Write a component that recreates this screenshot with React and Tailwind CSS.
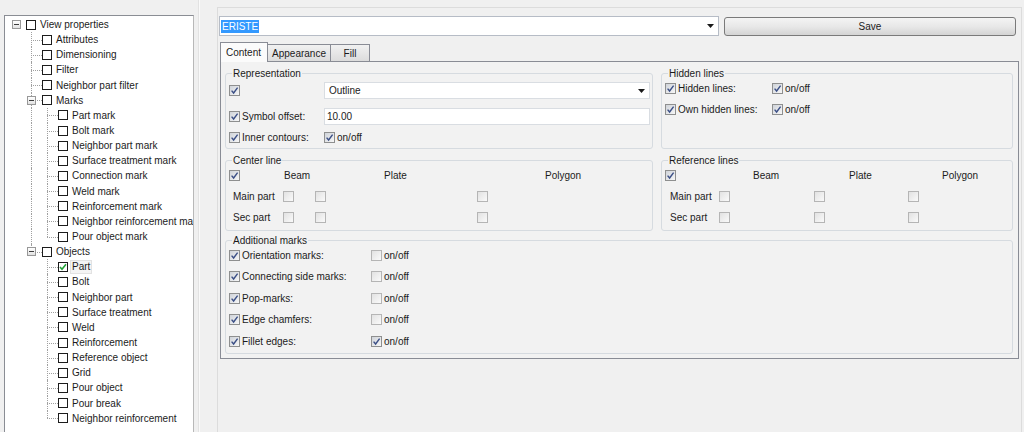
import React from 'react';

const Tick = () => (
  <svg viewBox="0 0 9 9" className="w-[9px] h-[9px]">
    <path d="M1.6 4.6 L3.6 7 L7.6 1.6" fill="none" stroke="#3b4f86" strokeWidth="1.4" />
  </svg>
);

function CB({ checked }) {
  return (
    <span
      className={
        checked
          ? 'inline-flex shrink-0 w-[11px] h-[11px] border border-[#8e8f8f] bg-gradient-to-br from-[#cfd3d9] to-[#f7f7f7] items-center justify-center'
          : 'inline-flex shrink-0 w-[11px] h-[11px] border border-[#b5b5b5] bg-gradient-to-br from-[#e2e2e2] to-[#fafafa] items-center justify-center'
      }
    >
      {checked && <Tick />}
    </span>
  );
}

function TCB({ checked }) {
  return (
    <span className="inline-flex shrink-0 ml-[2px] w-[10px] h-[10px] border border-[#1c1c1c] bg-white items-center justify-center">
      {checked && (
        <svg viewBox="0 0 8 8" className="w-[8px] h-[8px]">
          <path d="M1 4 L3 6.3 L7 1.2" fill="none" stroke="#22a338" strokeWidth="1.6" />
        </svg>
      )}
    </span>
  );
}

const Exp = () => (
  <span className="inline-flex w-[9px] h-[9px] border border-[#989898] bg-gradient-to-b from-white to-[#e2e2e2] items-center justify-center">
    <span className="w-[5px] h-px bg-[#3c3c3c]" />
  </span>
);

function Conn({ last, exp }) {
  return (
    <span className="relative w-[16px] h-full shrink-0">
      <span
        className={
          last
            ? 'absolute left-[7px] top-0 h-1/2 border-l border-dotted border-[#a0a0a0]'
            : 'absolute left-[7px] top-0 bottom-0 border-l border-dotted border-[#a0a0a0]'
        }
      />
      <span className="absolute left-[7px] right-[-2px] top-1/2 border-t border-dotted border-[#a0a0a0]" />
      {exp && (
        <span className="absolute left-[3px] top-[3px] flex">
          <Exp />
        </span>
      )}
    </span>
  );
}

function ContLine() {
  return (
    <span className="relative w-[16px] h-full shrink-0">
      <span className="absolute left-[7px] top-0 bottom-0 border-l border-dotted border-[#a0a0a0]" />
    </span>
  );
}

const tree = [
  { l: 0, t: 'View properties' },
  { l: 1, t: 'Attributes' },
  { l: 1, t: 'Dimensioning' },
  { l: 1, t: 'Filter' },
  { l: 1, t: 'Neighbor part filter' },
  { l: 1, t: 'Marks', exp: true },
  { l: 2, t: 'Part mark', cont: true },
  { l: 2, t: 'Bolt mark', cont: true },
  { l: 2, t: 'Neighbor part mark', cont: true },
  { l: 2, t: 'Surface treatment mark', cont: true },
  { l: 2, t: 'Connection mark', cont: true },
  { l: 2, t: 'Weld mark', cont: true },
  { l: 2, t: 'Reinforcement mark', cont: true },
  { l: 2, t: 'Neighbor reinforcement mark', cont: true },
  { l: 2, t: 'Pour object mark', cont: true, last: true },
  { l: 1, t: 'Objects', exp: true, last: true },
  { l: 2, t: 'Part', checked: true, sel: true },
  { l: 2, t: 'Bolt' },
  { l: 2, t: 'Neighbor part' },
  { l: 2, t: 'Surface treatment' },
  { l: 2, t: 'Weld' },
  { l: 2, t: 'Reinforcement' },
  { l: 2, t: 'Reference object' },
  { l: 2, t: 'Grid' },
  { l: 2, t: 'Pour object' },
  { l: 2, t: 'Pour break' },
  { l: 2, t: 'Neighbor reinforcement', last: true },
];

function TreeRow({ r }) {
  return (
    <div className="flex items-center h-[15.15px] whitespace-nowrap">
      {r.l === 0 ? (
        <span className="w-[16px] h-full shrink-0 flex items-center justify-center">
          <Exp />
        </span>
      ) : (
        <span className="w-[16px] h-full shrink-0" />
      )}
      {r.l === 1 && <Conn last={r.last} exp={r.exp} />}
      {r.l === 2 && (r.cont ? <ContLine /> : <span className="w-[16px] h-full shrink-0" />)}
      {r.l === 2 && <Conn last={r.last} />}
      <TCB checked={r.checked} />
      {r.sel ? (
        <span className="ml-[2px] px-[1px] border border-[#e2e2e2] bg-[#f4f4f4] leading-[12px]">{r.t}</span>
      ) : (
        <span className="ml-[4px] leading-[13px]">{r.t}</span>
      )}
    </div>
  );
}

const Arrow = () => (
  <svg viewBox="0 0 7 4" className="w-[7px] h-[4px]">
    <path d="M0 0 H7 L3.5 4 Z" fill="#1a1a1a" />
  </svg>
);

function Group({ title, className, children }) {
  return (
    <fieldset className={`border border-[#d6dbe0] rounded-[3px] pl-[3px] pr-[2px] ${className}`}>
      <legend className="ml-[3px] px-[1px] leading-[13px]">{title}</legend>
      {children}
    </fieldset>
  );
}

function Mark({ label, on, first }) {
  return (
    <div className={first ? 'flex items-center h-[14px] mt-[1px]' : 'flex items-center h-[14px]'}>
      <span className="flex items-center w-[142px]">
        <CB checked />
        <span className="ml-[2px]">{label}</span>
      </span>
      <CB checked={on} />
      <span className="ml-[2px]">on/off</span>
    </div>
  );
}

export default function App() {
  return (
    <div className="w-[1024px] h-[432px] overflow-hidden bg-[#f0f0f0] flex font-['Liberation_Sans',Arial,sans-serif] text-[10px] text-[#1b1b1b]">
      {/* left tree */}
      <div className="w-[194px] shrink-0 pl-[4px] pt-[15px]">
        <div className="w-[190px] h-[430px] bg-white border border-[#8a8d94] border-r-[#b8b8b8] overflow-hidden pl-[3px] pt-[1px]">
          {tree.map((r, i) => (
            <TreeRow key={i} r={r} />
          ))}
        </div>
      </div>
      {/* splitter */}
      <div className="w-[23px] shrink-0 flex">
        <span className="ml-[4px] w-px h-full bg-[#e2e2e2]" />
        <span className="w-px h-full bg-[#fafafa]" />
      </div>
      {/* right */}
      <div className="w-[805px] shrink-0 mt-[7px] border-l border-t border-r border-[#dcdcdc] pl-[1px] pt-[8px]">
        <div className="flex items-center gap-[5px]">
          <div className="w-[500px] h-[20px] bg-white border border-[#b6bcc6] flex items-center pl-[1px] pr-[4px]">
            <span className="bg-[#3399ff] text-white px-[1px] leading-[13px]">ERISTE</span>
            <span className="flex-1" />
            <Arrow />
          </div>
          <div className="w-[292px] h-[19px] rounded-[3px] border border-[#7a7a7a] bg-gradient-to-b from-[#f4f4f4] via-[#e8e8e8] to-[#d4d4d4] flex items-center justify-center">
            Save
          </div>
        </div>

        {/* tabs */}
        <div className="ml-[1px] mt-[6px] flex items-end h-[19px]">
          <div className="relative z-10 -mb-px h-[20px] w-[48px] border-l border-t border-r border-[#898c95] bg-[#fbfbfb] pl-[5px] flex items-center">
            Content
          </div>
          <div className="h-[17px] w-[63px] border-t border-r border-[#898c95] bg-gradient-to-b from-[#f1f1f1] to-[#dcdcdc] flex items-center justify-center">
            Appearance
          </div>
          <div className="h-[17px] w-[39px] border-t border-r border-[#898c95] bg-gradient-to-b from-[#f1f1f1] to-[#dcdcdc] flex items-center justify-center">
            Fill
          </div>
        </div>
        <div className="ml-[1px] w-[799px] h-[298px] border border-[#898c95] bg-[#f2f2f2] pl-[4px] pt-[5px]">
          <div className="grid grid-cols-[428px_352px] gap-x-[8px]">
            {/* Representation */}
            <Group title="Representation" className="h-[82px]">
              <div className="flex items-center h-[17px] mt-[2px]">
                <span className="w-[95px] flex items-center">
                  <CB checked />
                </span>
                <div className="w-[326px] h-[17px] bg-white border border-[#d9dde2] flex items-center pl-[4px] pr-[4px]">
                  <span>Outline</span>
                  <span className="flex-1" />
                  <Arrow />
                </div>
              </div>
              <div className="flex items-center h-[17px] mt-[9px]">
                <span className="w-[95px] flex items-center">
                  <CB checked />
                  <span className="ml-[2px]">Symbol offset:</span>
                </span>
                <div className="w-[326px] h-[17px] bg-white border border-[#d9dde2] flex items-center pl-[2px]">
                  10.00
                </div>
              </div>
              <div className="flex items-center h-[14px] mt-[5px]">
                <span className="w-[95px] flex items-center">
                  <CB checked />
                  <span className="ml-[2px]">Inner contours:</span>
                </span>
                <CB checked />
                <span className="ml-[2px]">on/off</span>
              </div>
            </Group>

            {/* Hidden lines */}
            <Group title="Hidden lines" className="h-[82px]">
              <div className="flex items-center h-[14px] mt-[1px]">
                <span className="w-[107px] flex items-center">
                  <CB checked />
                  <span className="ml-[2px]">Hidden lines:</span>
                </span>
                <CB checked />
                <span className="ml-[2px]">on/off</span>
              </div>
              <div className="flex items-center h-[14px] mt-[7px]">
                <span className="w-[107px] flex items-center">
                  <CB checked />
                  <span className="ml-[2px]">Own hidden lines:</span>
                </span>
                <CB checked />
                <span className="ml-[2px]">on/off</span>
              </div>
            </Group>

            {/* Center line */}
            <Group title="Center line" className="h-[77px] mt-[5px]">
              <div className="flex items-center h-[14px] mt-[1px]">
                <CB checked />
                <span className="ml-[44px] w-[100px]">Beam</span>
                <span className="w-[161px]">Plate</span>
                <span>Polygon</span>
              </div>
              <div className="flex items-center h-[14px] mt-[7px]">
                <span className="w-[54px] pl-[4px]">Main part</span>
                <CB />
                <span className="ml-[21px] flex">
                  <CB />
                </span>
                <span className="ml-[151px] flex">
                  <CB />
                </span>
              </div>
              <div className="flex items-center h-[14px] mt-[7px]">
                <span className="w-[54px] pl-[4px]">Sec part</span>
                <CB />
                <span className="ml-[21px] flex">
                  <CB />
                </span>
                <span className="ml-[151px] flex">
                  <CB />
                </span>
              </div>
            </Group>

            {/* Reference lines */}
            <Group title="Reference lines" className="h-[77px] mt-[5px]">
              <div className="flex items-center h-[14px] mt-[1px]">
                <CB checked />
                <span className="ml-[77px] w-[96px]">Beam</span>
                <span className="w-[93px]">Plate</span>
                <span>Polygon</span>
              </div>
              <div className="flex items-center h-[14px] mt-[7px]">
                <span className="w-[54px] pl-[5px]">Main part</span>
                <CB />
                <span className="ml-[84px] flex">
                  <CB />
                </span>
                <span className="ml-[83px] flex">
                  <CB />
                </span>
              </div>
              <div className="flex items-center h-[14px] mt-[7px]">
                <span className="w-[54px] pl-[5px]">Sec part</span>
                <CB />
                <span className="ml-[84px] flex">
                  <CB />
                </span>
                <span className="ml-[83px] flex">
                  <CB />
                </span>
              </div>
            </Group>

            {/* Additional marks */}
            <Group title="Additional marks" className="col-span-2 h-[120px] mt-[3px]">
              <div className="flex flex-col gap-[7.5px]">
                <Mark first label="Orientation marks:" />
                <Mark label="Connecting side marks:" />
                <Mark label="Pop-marks:" />
                <Mark label="Edge chamfers:" />
                <Mark label="Fillet edges:" on />
              </div>
            </Group>
          </div>
        </div>
      </div>
    </div>
  );
}
